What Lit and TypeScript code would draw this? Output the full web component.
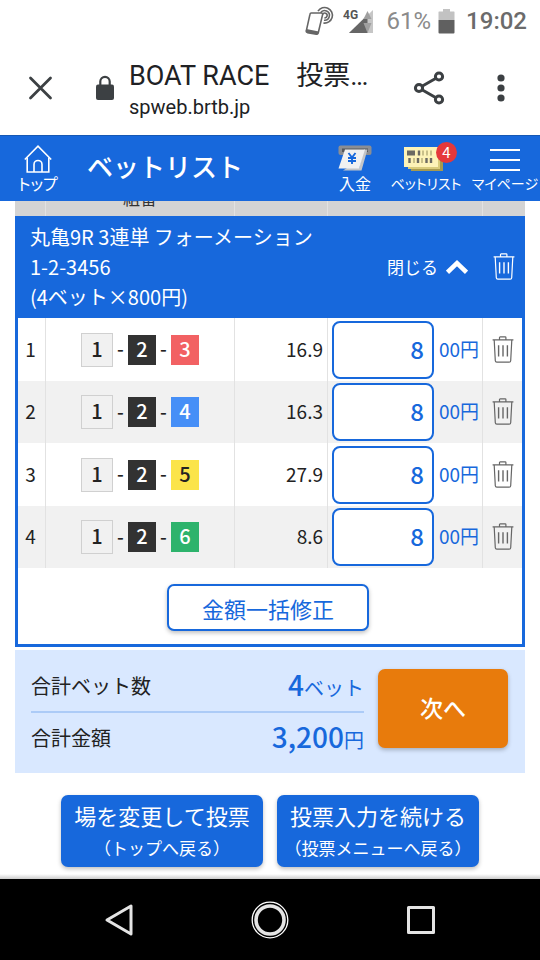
import { LitElement, html, svg, css } from "lit";
import { customElement, property, state } from "lit/decorators.js";
import { classMap } from "lit/directives/class-map.js";

interface Bet {
  boats: number[];
  odds: string;
  amount: string;
}

const reset = css`
  *, *::before, *::after { box-sizing: border-box; }
  button {
    font: inherit;
    color: inherit;
    background: none;
    border: 0;
    margin: 0;
    padding: 0;
    cursor: pointer;
  }
  svg { display: block; flex: none; }
`;

const trashIcon = html`
  <svg width="22" height="28" viewBox="0 0 22 28" fill="none" stroke="currentColor" stroke-width="1.2" aria-hidden="true">
    ${svg`
      <path d="M0.6 3.8H21.4M7.5 3.5V1.6Q7.5 0.9 8.2 0.9H13.2Q13.9 0.9 13.9 1.6V3.5"/>
      <path d="M2.2 4L3.3 24.8Q3.4 26.2 4.8 26.2H17.2Q18.6 26.2 18.7 24.8L19.8 4"/>
      <path d="M6.6 9.2V20.4M11 9.2V20.4M15.4 9.2V20.4" stroke-width="1.4"/>
    `}
  </svg>
`;

@customElement("phone-status")
class PhoneStatus extends LitElement {
  static styles = [reset, css`
    :host {
      display: flex;
      justify-content: flex-end;
      align-items: center;
      height: 42px;
      padding-right: 13px;
      font: 500 24px/28px Roboto, sans-serif;
      color: #6b6b6b;
    }
    .nfc { margin-right: 8px; }
    .signal { margin-right: 14px; }
    .charge { font-weight: 400; color: #8b8b8b; margin-right: 7px; }
    .battery { margin-right: 11px; }
    .net { font: 700 12px Roboto, sans-serif; }
  `];

  render() {
    return html`
      <svg class="nfc" width="30" height="30" viewBox="0 0 30 30" fill="none" stroke="#666" stroke-width="1.6" aria-hidden="true">
        <path d="M6.2 7H16.4Q18 7 17.6 8.6L13.2 27Q12.8 28.4 11.4 28.2L2.4 26.6Q0.9 26.2 1.3 24.8L5 8.2Q5.2 7 6.2 7Z"/>
        <path d="M1.4 23L13.8 25.6L12.8 28.6L1.2 26.4Z" fill="#666" stroke="none"/>
        <path d="M13 5.2A7.8 7.8 0 1 1 18.4 17"/>
        <path d="M15.6 6.8A4.8 4.8 0 1 1 19 14.2"/>
        <path d="M17.6 8.4A2.4 2.4 0 1 1 19.4 11.8"/>
      </svg>
      <svg class="signal" width="30" height="28" viewBox="0 0 30 28" role="img" aria-label="4G">
        <path d="M30 3V26H6Z" fill="#c6c6c6"/>
        <path d="M24.500 8V26H6Z" fill="#666"/>
        <path d="M24.500 4L28.500 12H20.500ZM24.500 26L28.500 16H20.500Z" fill="#a0a0a0"/>
        <text class="net" x="0" y="12" fill="#555">4G</text>
      </svg>
      <span class="charge">61%</span>
      <svg class="battery" width="17" height="26" viewBox="0 0 17 26" aria-hidden="true">
        <path d="M5 1H12V3.500H16Q16.500 3.500 16.500 4V12H0.500V4Q0.500 3.500 1 3.500H5Z" fill="#c2c2c2"/>
        <path d="M0.500 12H16.500V24.500Q16.500 25.500 15.500 25.500H1.500Q0.500 25.500 0.500 24.500Z" fill="#606060"/>
      </svg>
      <span>19:02</span>
    `;
  }
}

@customElement("browser-bar")
class BrowserBar extends LitElement {
  static styles = [reset, css`
    :host {
      display: flex;
      align-items: center;
      height: 93px;
      padding: 0 29px 2px 28px;
      color: #3c4043;
      font-family: Roboto, "Noto Sans CJK JP", sans-serif;
    }
    .lock { margin: 0 14px 0 42px; }
    .page { flex: 1; min-width: 0; padding-top: 4px; }
    .title { font-size: 27px; line-height: 34px; color: #202124; white-space: nowrap; }
    .url { font-size: 20px; line-height: 28px; color: #202124; }
    .tools { display: flex; align-items: center; gap: 46px; }
  `];

  render() {
    return html`
      <button aria-label="閉じる">
        <svg width="25" height="26" viewBox="0 0 25 26" fill="none" stroke="currentColor" stroke-width="2.800" stroke-linecap="round">
          <path d="M2.500 3L22.500 23M22.500 3L2.500 23"/>
        </svg>
      </button>
      <svg class="lock" width="20" height="26" viewBox="0 0 20 26" aria-hidden="true">
        <path d="M5.300 10V6.600A4.700 4.700 0 0 1 14.700 6.600V10" fill="none" stroke="currentColor" stroke-width="2.200"/>
        <rect x="1" y="9.500" width="18" height="15.500" rx="2" fill="currentColor"/>
      </svg>
      <div class="page">
        <div class="title">BOAT RACE　投票…</div>
        <div class="url">spweb.brtb.jp</div>
      </div>
      <div class="tools">
        <button aria-label="共有">
          <svg width="32" height="36" viewBox="0 0 32 36" fill="none" stroke="currentColor" stroke-width="3">
            <path d="M9 16.300L23 8.300M9 19.700L23 27.700"/>
            <circle cx="6" cy="18" r="3.600"/>
            <circle cx="26" cy="6.500" r="3.600"/>
            <circle cx="26" cy="29.500" r="3.600"/>
          </svg>
        </button>
        <button aria-label="メニュー">
          <svg width="20" height="30" viewBox="0 0 20 30" fill="currentColor">
            <circle cx="10" cy="5" r="3.600"/>
            <circle cx="10" cy="15" r="3.600"/>
            <circle cx="10" cy="25" r="3.600"/>
          </svg>
        </button>
      </div>
    `;
  }
}

@customElement("site-header")
class SiteHeader extends LitElement {
  @property({ type: Number }) count = 0;

  static styles = [reset, css`
    :host {
      display: flex;
      position: relative;
      z-index: 1;
      height: 66px;
      color: #fff;
      background: #1768dc;
      border-top: 1px solid #1658b4;
      font-family: "Noto Sans CJK JP", sans-serif;
    }
    a {
      display: flex;
      flex-direction: column;
      align-items: center;
      justify-content: flex-end;
      padding-bottom: 8px;
      color: inherit;
      text-decoration: none;
      font-size: 16px;
      line-height: 20px;
      white-space: nowrap;
      font-feature-settings: "palt";
    }
    .home { width: 76px; }
    h1 {
      flex: 1;
      margin: 0;
      padding-left: 11px;
      font-size: 26px;
      font-weight: 500;
      line-height: 60px;
    }
    nav { display: flex; gap: 4px; }
    .deposit { width: 54px; }
    .list { width: 80px; font-size: 14px; }
    .mypage { width: 70px; font-size: 14px; }
    .icon { position: relative; }
    .badge {
      position: absolute;
      top: -3px;
      right: -9px;
      width: 21px;
      height: 21px;
      border-radius: 50%;
      background: #e5383b;
      font-size: 15px;
      line-height: 20px;
      text-align: center;
    }
  `];

  render() {
    return html`
      <a class="home" href="#top">
        <svg width="28" height="28" viewBox="0 0 28 28" fill="none" stroke="#fff" stroke-width="1.600">
          <path d="M0.800 14.500L14 1.200L27.200 14.500"/>
          <path d="M3.200 12.500V27H24.800V12.500"/>
          <path d="M10 27V19.500A4 4 0 0 1 18 19.500V27"/>
        </svg>
        トップ
      </a>
      <h1>ベットリスト</h1>
      <nav>
        <a class="deposit" href="#deposit">
          <svg width="34" height="29" viewBox="0 0 34 29">
            <rect x="0.500" y="1.500" width="33" height="9.500" rx="2" fill="#8b8e93"/>
            <rect x="4" y="4.500" width="26" height="3.500" fill="#55585d"/>
            <path d="M26 5.500H29.500L23.500 26.500H5L9 24H21Z" fill="#c3c5c8"/>
            <path d="M7 5.500H27L21 24.500H0.500Z" fill="#f1f1f1"/>
            <path d="M10.500 9L14 13.500L17.500 9M14 13.500V20M10 14H18M10 17H18" fill="none" stroke="#1768dc" stroke-width="1.900"/>
          </svg>
          入金
        </a>
        <a class="list" href="#list">
          <span class="icon">
            <svg width="44" height="28" viewBox="0 0 44 28">
              <rect x="7" y="8" width="32" height="18" fill="#a69a50"/>
              <rect x="4" y="5" width="32" height="19" fill="#d9cc7c"/>
              <rect x="0" y="2" width="34" height="20" fill="#fdf3b8"/>
              <path d="M3 8H11" stroke="#6b6a63" stroke-width="5"/>
              <path d="M15 5.500V10.500M5.500 13V18M14 13V18M22.500 13V18M27 13V18" stroke="#6b6a63" stroke-width="2.400"/>
              <path d="M19 5.500V10.500M23 5.500V10.500M27 5.500V10.500M10 13V18M18 13V18" stroke="#c9c08a" stroke-width="2"/>
            </svg>
            <span class="badge">${this.count}</span>
          </span>
          ベットリスト
        </a>
        <a class="mypage" href="#mypage">
          <svg width="32" height="28" viewBox="0 0 32 28" stroke="#fff" stroke-width="2">
            <path d="M1 5H31M1 15H31M1 25H31"/>
          </svg>
          マイページ
        </a>
      </nav>
    `;
  }
}

@customElement("bet-table")
class BetTable extends LitElement {
  @property({ attribute: false }) bets: Bet[] = [];
  @state() private open = true;

  static styles = [reset, css`
    :host { display: block; margin-top: -25px; }
    table {
      width: 100%;
      table-layout: fixed;
      border-collapse: separate;
      border-spacing: 0;
      font-size: 19px;
      color: #222;
    }
    th, td { padding: 0; font-weight: 400; }
    .c-no { width: 30px; }
    .c-odds { width: 93px; }
    .c-amount { width: 155px; }
    .c-del { width: 43px; }
    thead th {
      height: 40px;
      padding-top: 4px;
      background: #d4d4d4;
      font-size: 17px;
      line-height: 24px;
      color: #333;
    }
    thead th + th, .bet td { border-left: 1px solid #e2e2e2; }
    .group td, .group th { background: #1768dc; color: #fff; height: 102px; }
    .toggle {
      display: flex;
      width: 100%;
      align-items: center;
      justify-content: space-between;
      padding: 0 14px 0 15px;
      text-align: left;
      font-size: 20px;
      line-height: 30px;
    }
    .close { display: flex; align-items: center; gap: 8px; font-size: 17px; }
    .bet > * { height: 63px; background: #fff; }
    .bet.even > * { height: 62px; background: #f1f1f1; }
    .bet th { border-left: 3px solid #1768dc; text-align: center; padding: 0 2px 3px 0; }
    .bet td:last-child { border-right: 3px solid #1768dc; }
    .bet .odds { text-align: right; padding: 0 4px 3px 0; }
    .combo { display: flex; align-items: center; justify-content: center; }
    .dash { width: 15px; padding-bottom: 4px; text-align: center; font-weight: 500; }
    .boat {
      width: 28px;
      height: 30px;
      font-size: 20px;
      font-weight: 500;
      line-height: 27px;
      text-align: center;
      color: #fff;
    }
    .b1 { width: 32px; height: 34px; line-height: 29px; background: #f1f1f1; border: 1px solid #d0d0d0; color: #222; }
    .b2 { background: #323232; }
    .b3 { background: #f26163; }
    .b4 { background: #468ff7; }
    .b5 { background: #fbe44a; color: #222; }
    .b6 { background: #2db36c; }
    .amount {
      display: flex;
      align-items: center;
      justify-content: space-between;
      padding: 0 3px 0 4px;
      color: #1768dc;
    }
    .amount label { padding-bottom: 3px; }
    input {
      width: 102px;
      height: 58px;
      margin: 0;
      padding: 0 8px 3px;
      border: 2px solid #1768dc;
      border-radius: 8px;
      background: #fff;
      color: #1768dc;
      font: 500 24px "Noto Sans CJK JP", sans-serif;
      text-align: right;
    }
    .trash { display: block; margin: 0 auto; color: #666; }
    .group .trash { color: #fff; }
    .foot td {
      height: 79px;
      padding-top: 3px;
      border: 3px solid #1768dc;
      border-top: 0;
      text-align: center;
    }
    .bulk {
      width: 202px;
      height: 47px;
      margin-right: 4px;
      border: 2px solid #1768dc;
      border-radius: 7px;
      background: #fff;
      color: #1768dc;
      font-size: 22px;
      line-height: 40px;
      box-shadow: 0 2px 4px rgba(0, 0, 0, 0.25);
    }
  `];

  private edit(i: number, e: Event) {
    const amount = (e.target as HTMLInputElement).value;
    this.bets = this.bets.map((b, n) => (n === i ? { ...b, amount } : b));
  }

  private row(bet: Bet, i: number) {
    return html`
      <tr class=${classMap({ bet: true, even: i % 2 === 1 })}>
        <th scope="row">${i + 1}</th>
        <td>
          <div class="combo">
            ${bet.boats.map((n, k) => html`
              ${k ? html`<span class="dash">-</span>` : null}
              <span class="boat b${n}">${n}</span>
            `)}
          </div>
        </td>
        <td class="odds">${bet.odds}</td>
        <td>
          <div class="amount">
            <input id="a${i}" inputmode="numeric" .value=${bet.amount} @input=${(e: Event) => this.edit(i, e)} />
            <label for="a${i}">00円</label>
          </div>
        </td>
        <td><button class="trash" aria-label="削除">${trashIcon}</button></td>
      </tr>
    `;
  }

  render() {
    return html`
      <table>
        <colgroup>
          <col class="c-no" /><col /><col class="c-odds" /><col class="c-amount" /><col class="c-del" />
        </colgroup>
        <thead>
          <tr><th></th><th scope="col">組番</th><th></th><th></th><th></th></tr>
        </thead>
        <tbody>
          <tr class="group">
            <th colspan="4">
              <button class="toggle" aria-expanded=${this.open} @click=${() => (this.open = !this.open)}>
                <span>丸亀9R 3連単 フォーメーション<br />1-2-3456<br />(4ベット×800円)</span>
                <span class="close">
                  閉じる
                  <svg width="22" height="14" viewBox="0 0 22 14" fill="none" stroke="#fff" stroke-width="4.500">
                    <path d="M1.500 12.300L11 3.200L20.500 12.300"/>
                  </svg>
                </span>
              </button>
            </th>
            <td><button class="trash" aria-label="すべて削除">${trashIcon}</button></td>
          </tr>
          ${this.open ? this.bets.map((b, i) => this.row(b, i)) : null}
          <tr class="foot"><td colspan="5"><button class="bulk">金額一括修正</button></td></tr>
        </tbody>
      </table>
    `;
  }
}

@customElement("bet-summary")
class BetSummary extends LitElement {
  static styles = [reset, css`
    :host {
      display: flex;
      gap: 14px;
      margin-top: 3px;
      padding: 10px 17px 10px 16px;
      background: #d9e8ff;
    }
    dl { flex: 1; margin: 0; }
    .line {
      display: flex;
      align-items: center;
      justify-content: space-between;
      height: 51px;
      font-size: 20px;
      color: #222;
    }
    .line + .line { border-top: 2px solid #accbf7; height: 52px; }
    dt { line-height: 30px; }
    dd { margin: 0; color: #1768dc; line-height: 40px; }
    strong { font-size: 28px; font-weight: 500; }
    .next {
      width: 130px;
      height: 79px;
      margin-top: 9px;
      padding-bottom: 4px;
      border-radius: 7px;
      background: #e87b0c;
      color: #fff;
      font-size: 23px;
      font-weight: 500;
      box-shadow: 0 2px 4px rgba(0, 0, 0, 0.25);
    }
  `];

  render() {
    return html`
      <dl>
        <div class="line"><dt>合計ベット数</dt><dd><strong>4</strong>ベット</dd></div>
        <div class="line"><dt>合計金額</dt><dd><strong>3,200</strong>円</dd></div>
      </dl>
      <button class="next">次へ</button>
    `;
  }
}

@customElement("phone-nav")
class PhoneNav extends LitElement {
  static styles = [reset, css`
    :host {
      display: grid;
      grid-template-columns: repeat(3, 1fr);
      align-items: center;
      justify-items: center;
      height: 81px;
      padding: 0 8%;
      background: #000;
    }
  `];

  render() {
    return html`
      <button aria-label="戻る">
        <svg width="40" height="40" viewBox="0 0 40 40" fill="none" stroke="#e4e4e4" stroke-width="3" stroke-linejoin="round">
          <path d="M32 6V34L8 20Z"/>
        </svg>
      </button>
      <button aria-label="ホーム">
        <svg width="40" height="40" viewBox="0 0 40 40" fill="none">
          <circle cx="20" cy="20" r="17.800" stroke="#fff" stroke-width="1.300"/>
          <circle cx="20" cy="20" r="14" stroke="#e4e4e4" stroke-width="3.600"/>
        </svg>
      </button>
      <button aria-label="アプリ履歴">
        <svg width="40" height="40" viewBox="0 0 40 40" fill="none" stroke="#e4e4e4" stroke-width="3" stroke-linejoin="round">
          <rect x="7.500" y="7.500" width="25" height="25"/>
        </svg>
      </button>
    `;
  }
}

@customElement("app-root")
class AppRoot extends LitElement {
  private bets: Bet[] = [
    { boats: [1, 2, 3], odds: "16.9", amount: "8" },
    { boats: [1, 2, 4], odds: "16.3", amount: "8" },
    { boats: [1, 2, 5], odds: "27.9", amount: "8" },
    { boats: [1, 2, 6], odds: "8.6", amount: "8" },
  ];

  static styles = [reset, css`
    :host {
      display: flex;
      flex-direction: column;
      min-height: 100vh;
      background: #fff;
      font-family: "Noto Sans CJK JP", sans-serif;
    }
    main {
      flex: 1;
      padding: 0 15px 12px;
      background: linear-gradient(to top, #ccc, #fff 5px);
    }
    .back { display: flex; justify-content: center; gap: 14px; margin-top: 22px; }
    .back button {
      display: flex;
      flex-direction: column;
      align-items: center;
      justify-content: center;
      width: 202px;
      height: 72px;
      border-radius: 7px;
      background: #1768dc;
      color: #fff;
      font-size: 22px;
      line-height: 34px;
      white-space: nowrap;
      box-shadow: 0 2px 4px rgba(0, 0, 0, 0.25);
    }
    .back small { font-size: 17px; line-height: 32px; }
  `];

  render() {
    return html`
      <phone-status></phone-status>
      <browser-bar></browser-bar>
      <site-header .count=${this.bets.length}></site-header>
      <main>
        <bet-table .bets=${this.bets}></bet-table>
        <bet-summary></bet-summary>
        <div class="back">
          <button>場を変更して投票<small>（トップへ戻る）</small></button>
          <button>投票入力を続ける<small>（投票メニューへ戻る）</small></button>
        </div>
      </main>
      <phone-nav></phone-nav>
    `;
  }
}
